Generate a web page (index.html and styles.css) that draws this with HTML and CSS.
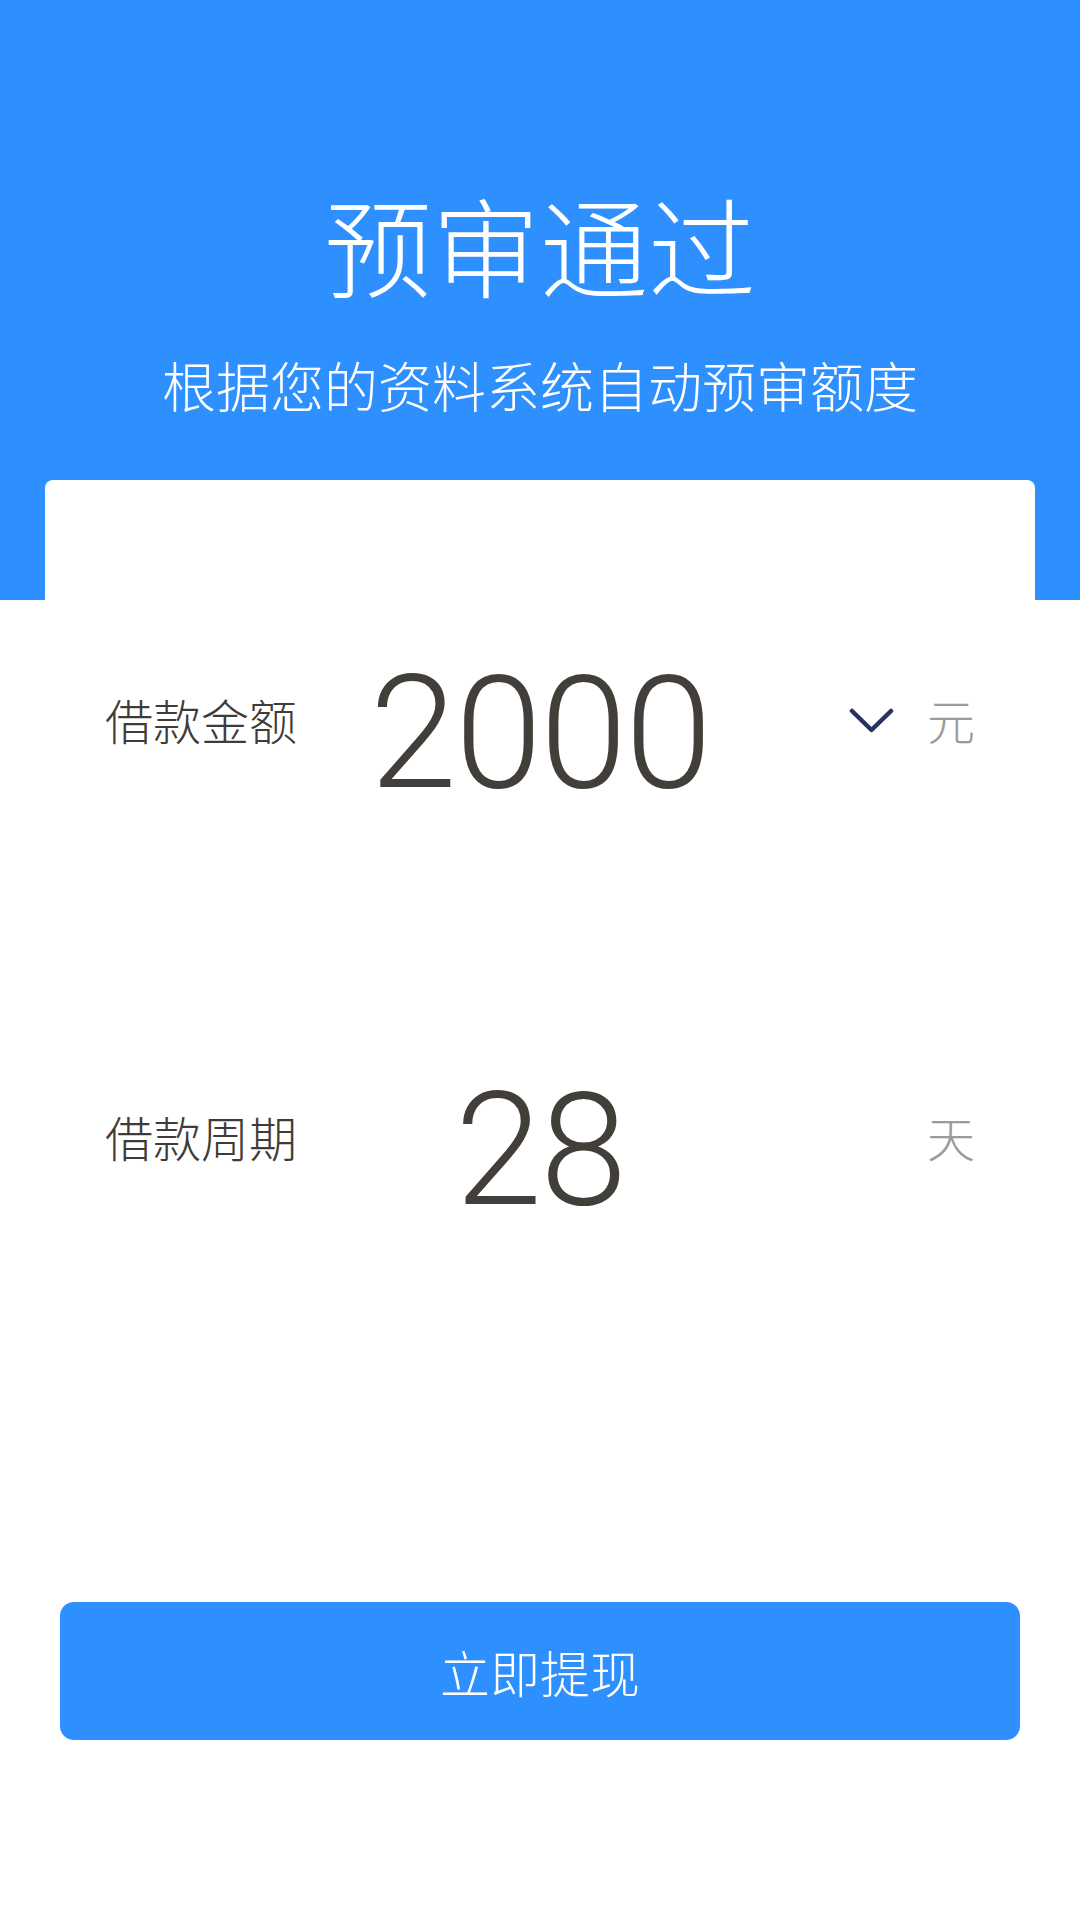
FILE: index.html
```html
<!DOCTYPE html>
<html lang="zh-CN">

<head>
    <meta charset="UTF-8" />
    <meta name="viewport" content="width=device-width, initial-scale=1.0" />
    <title>预审通过</title>
    <link rel="stylesheet" href="styles.css">
</head>

<body>
    <header class="hero">
        <h1 class="hero-title">预审通过</h1>
        <p class="hero-sub">根据您的资料系统自动预审额度</p>
    </header>

    <section class="card">
        <div class="row">
            <span class="row-label">借款金额</span>
            <span class="row-value">2000</span>
            <span class="row-end">
                <svg class="chevron" width="45" height="26" viewBox="0 0 45 26">
                    <path d="M3 3 L22.5 22 L42 3" fill="none" stroke="#28325f" stroke-width="4.5"
                        stroke-linecap="round" stroke-linejoin="round" />
                </svg>
                <span class="row-unit">元</span>
            </span>
        </div>

        <div class="row">
            <span class="row-label">借款周期</span>
            <span class="row-value">28</span>
            <span class="row-end">
                <span class="row-unit">天</span>
            </span>
        </div>
    </section>

    <div class="actions">
        <button class="submit-btn" type="button">立即提现</button>
    </div>
</body>

</html>
```

FILE: styles.css
```css
body {
    margin: 0;
    background: #fff;
    font-family: "Noto Sans CJK SC", "Liberation Sans", sans-serif;
}

.hero {
    height: 600px;
    box-sizing: border-box;
    padding-top: 189px;
    background: #2e8fff;
    color: #fff;
    text-align: center;
}

.hero-title {
    margin: 0;
    font-size: 108px;
    font-weight: 300;
    line-height: 108px;
}

.hero-sub {
    margin: 61px 0 0;
    font-size: 54px;
    font-weight: 300;
    line-height: 54px;
}

.card {
    margin: -120px 45px 0;
    padding: 45px 60px 0;
    background: #fff;
    border-radius: 8px 8px 0 0;
    display: flex;
    flex-direction: column;
    gap: 119px;
}

.row {
    height: 298px;
    box-sizing: border-box;
    padding-top: 100px;
    display: grid;
    grid-template-columns: 1fr auto 1fr;
    align-items: center;
}

.row-label {
    font-size: 48px;
    font-weight: 300;
    color: #3f3b38;
    line-height: 1;
    margin-top: -10px;
}

/* big light digits for the amount / term */
.row-value {
    font-family: Roboto, "Liberation Sans", sans-serif;
    font-weight: 300;
    font-size: 157px;
    letter-spacing: -2px;
    line-height: 1;
    color: #423e3a;
    padding-top: 19px;
}

.row-end {
    display: flex;
    align-items: center;
    justify-content: flex-end;
    gap: 33px;
}

.chevron {
    margin-top: -6px;
}

.row-unit {
    font-size: 48px;
    font-weight: 300;
    color: #9b9b9b;
    line-height: 1;
    margin-top: -10px;
}

.actions {
    padding: 362px 60px 0;
}

.submit-btn {
    display: block;
    width: 100%;
    height: 138px;
    border: none;
    border-radius: 14px;
    background: #2e8fff;
    color: #fff;
    font-family: "Noto Sans CJK SC", sans-serif;
    font-size: 50px;
    font-weight: 300;
    cursor: pointer;
}
```
